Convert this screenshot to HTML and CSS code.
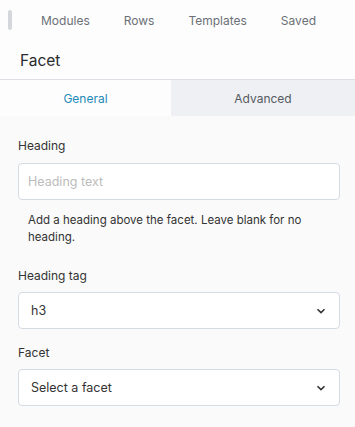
FILE: index.html
```html
<!DOCTYPE html>
<html lang="en">
<head>
    <meta charset="UTF-8">
    <meta name="viewport" content="width=device-width, initial-scale=1.0">
    <title>Facet settings</title>
    <link rel="stylesheet" href="styles.css">
</head>
<body>
    <div class="panel">
        <div class="topbar">
            <div class="grip"></div>
            <nav class="nav">
                <span class="nav-item">Modules</span>
                <span class="nav-item">Rows</span>
                <span class="nav-item">Templates</span>
                <span class="nav-item">Saved</span>
            </nav>
        </div>

        <h1 class="title">Facet</h1>

        <div class="tabs">
            <div class="tab active">General</div>
            <div class="tab">Advanced</div>
        </div>

        <div class="form">
            <div class="field">
                <label class="label">Heading</label>
                <input class="input" type="text" placeholder="Heading text">
                <p class="help">Add a heading above the facet. Leave blank for no heading.</p>
            </div>

            <div class="field">
                <label class="label">Heading tag</label>
                <div class="select">
                    <span>h3</span>
                    <svg class="chevron" width="10" height="6" viewBox="0 0 10 6"><path d="M1.5 1.2 L5 4.6 L8.5 1.2" fill="none" stroke="#333" stroke-width="1.6"/></svg>
                </div>
            </div>

            <div class="field">
                <label class="label">Facet</label>
                <div class="select">
                    <span>Select a facet</span>
                    <svg class="chevron" width="10" height="6" viewBox="0 0 10 6"><path d="M1.5 1.2 L5 4.6 L8.5 1.2" fill="none" stroke="#333" stroke-width="1.6"/></svg>
                </div>
            </div>
        </div>
    </div>
</body>
</html>
```

FILE: styles.css
```css
body {
    margin: 0;
    font-family: 'Inter', 'Liberation Sans', sans-serif;
    background: #fafafa;
    color: #333;
}

.panel {
    width: 355px;
    min-height: 427px;
    background: #fafafa;
}

.topbar {
    height: 40px;
    display: flex;
    align-items: center;
    padding-left: 8px;
    background: #fdfdfd;
}

.grip {
    width: 4px;
    height: 20px;
    border-radius: 2px;
    background: #d3d7dc;
}

.nav {
    display: flex;
    gap: 34px;
    margin-left: 29px;
}

.nav-item {
    font-size: 12px;
    color: #6b7077;
}

.title {
    margin: 0;
    height: 39px;
    padding-left: 20px;
    font-size: 15.5px;
    font-weight: normal;
    line-height: 42px;
    color: #2b2b2b;
    background: #fdfdfd;
    box-sizing: border-box;
}

.tabs {
    display: flex;
    border-top: 1px solid #dde1e6;
    height: 36px;
}

.tab {
    flex: 1;
    display: flex;
    align-items: center;
    justify-content: center;
    font-size: 12px;
    color: #555a60;
    background: #eef0f4;
}

.tab.active {
    flex: 0 0 171px;
    color: #1f8ab7;
    background: #fdfdfd;
}

.form {
    padding: 22px 16px 0 18px;
}

.field {
    margin-bottom: 16px;
}

.field:first-child {
    margin-bottom: 22px;
}

.label {
    display: block;
    font-size: 12px;
    color: #333;
    margin-bottom: 9px;
}

.field:first-child .label {
    margin-bottom: 10px;
}

.input,
.select {
    box-sizing: border-box;
    width: 322px;
    height: 37px;
    border: 1px solid #d4dbe5;
    border-radius: 4px;
    background: #fff;
    font-family: inherit;
    font-size: 12.5px;
}

.input {
    display: block;
    padding: 0 9px;
    color: #333;
    outline: none;
}

.input::placeholder {
    color: #bcbcbc;
}

.help {
    margin: 12px 0 0 10px;
    font-size: 11.5px;
    line-height: 17px;
    color: #333;
}

.select {
    display: flex;
    align-items: center;
    justify-content: space-between;
    padding: 0 12px;
    color: #333;
}

.chevron {
    margin-right: 1px;
}
```
